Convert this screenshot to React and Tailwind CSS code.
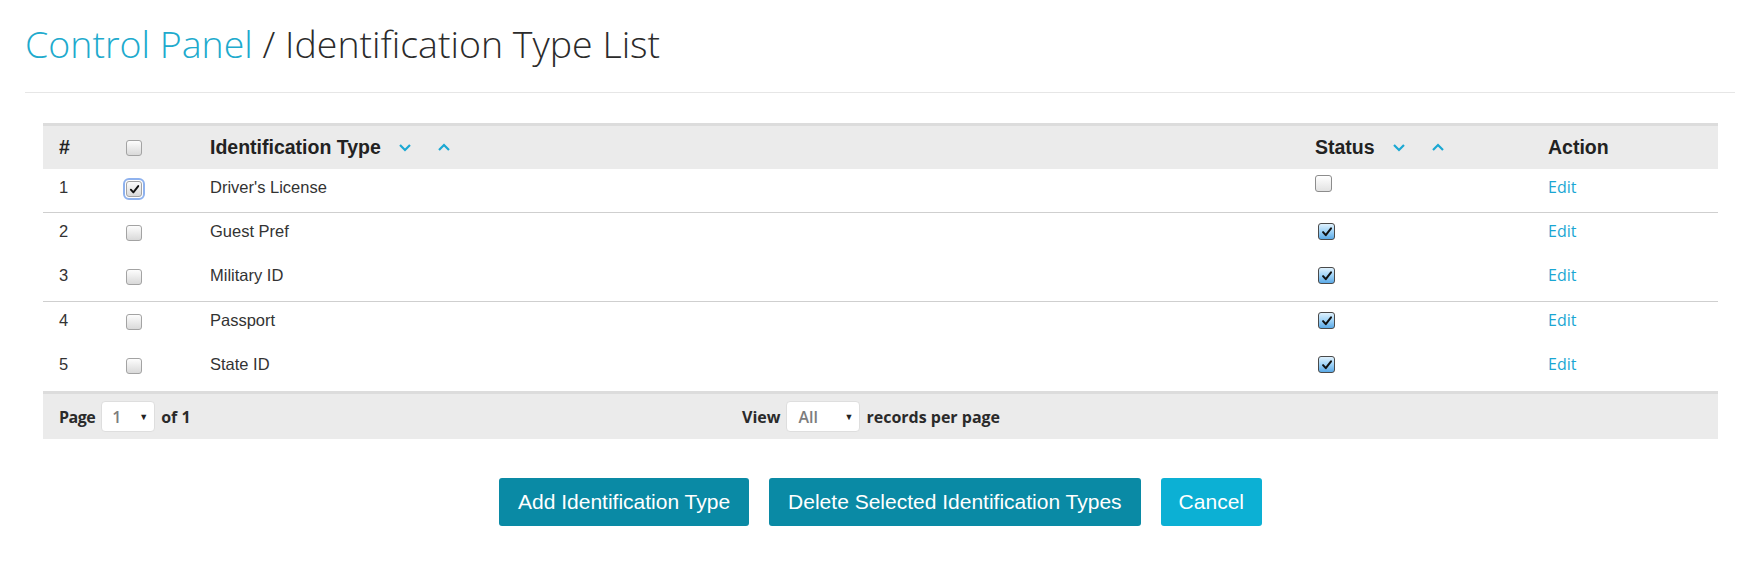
import React from "react";

const rows = [
  { id: 1, name: "Driver's License", picked: true, active: false, line: true, h: "h-[44px]" },
  { id: 2, name: "Guest Pref", picked: false, active: true, line: false, h: "h-[44px]" },
  { id: 3, name: "Military ID", picked: false, active: true, line: true, h: "h-[45px]" },
  { id: 4, name: "Passport", picked: false, active: true, line: false, h: "h-[44px]" },
  { id: 5, name: "State ID", picked: false, active: true, line: false, h: "h-[45px]" },
];

function Check({ className = "" }) {
  return (
    <svg viewBox="0 0 16 16" className={className}>
      <path d="M3.5 8.2 L6.6 11.6 L12.6 3.8" fill="none" stroke="#111" strokeWidth="2.3" strokeLinecap="round" strokeLinejoin="round" />
    </svg>
  );
}

function GrayBox({ checked, focus }) {
  return (
    <span
      className={`inline-flex h-[16px] w-[16px] items-center justify-center rounded-[3px] border border-[#a3a3a3] bg-linear-to-b from-[#fdfdfd] to-[#d9d9d9] ${
        focus ? "outline-2 outline-offset-1 outline-[#8fb2ee]" : ""
      }`}
    >
      {checked && <Check className="h-[13px] w-[13px]" />}
    </span>
  );
}

function BlueBox() {
  return (
    <span className="ml-[3px] mt-[3px] inline-flex h-[17px] w-[17px] items-center justify-center rounded-[3px] border border-[#4a4a4a] bg-linear-to-b from-[#dff1fd] via-[#9fd3f7] to-[#5aa9e6]">
      <Check className="h-[14px] w-[14px]" />
    </span>
  );
}

function Sorters() {
  return (
    <span className="ml-[17px] flex items-center gap-[25px]">
      <svg viewBox="0 0 14 9" className="h-[9px] w-[14px]">
        <polyline points="2,2 7,7 12,2" fill="none" stroke="#1ba8d3" strokeWidth="2.2" />
      </svg>
      <svg viewBox="0 0 14 9" className="h-[9px] w-[14px]">
        <polyline points="2,7 7,2 12,7" fill="none" stroke="#1ba8d3" strokeWidth="2.2" />
      </svg>
    </span>
  );
}

function Select({ value, width, pad }) {
  return (
    <span
      className={`relative mx-[6px] flex h-[31px] ${width} ${pad} items-center rounded-[4px] border border-[#dedede] bg-white font-['Open_Sans'] text-[16px] font-semibold text-[#7d7d7d]`}
    >
      {value}
      <span className="absolute right-[6px] top-[8px] text-[9px] text-[#222]">▼</span>
    </span>
  );
}

export default function App() {
  return (
    <div className="min-h-[578px] bg-white font-['Liberation_Sans',Arial,sans-serif] text-[#333]">
      <div className="ml-[25px] mr-[4px] border-b border-[#e6e6e6] pb-[28px] pt-[24px]">
        <h1 className="font-['Open_Sans',sans-serif] text-[37.5px] font-light leading-[40px] text-[#2b2b2b]">
          <span className="text-[#20aacd]">Control Panel</span> / Identification Type List
        </h1>
      </div>

      <div className="ml-[43px] mr-[21px] mt-[30px]">
        <div className="grid h-[46px] grid-cols-[67px_84px_1105px_233px_1fr] items-center border-t-[3px] border-[#dcdcdc] bg-[#ebebeb] pl-[16px] text-[19.5px] font-bold text-[#222]">
          <span>#</span>
          <span className="flex"><GrayBox /></span>
          <span className="flex items-center">Identification Type<Sorters /></span>
          <span className="flex items-center">Status<Sorters /></span>
          <span>Action</span>
        </div>

        {rows.map((r) => (
          <div
            key={r.id}
            className={`grid ${r.h} grid-cols-[67px_84px_1105px_233px_1fr] items-start pl-[16px] pt-[7px] text-[16.5px] leading-[22px] ${
              r.line ? "border-b border-[#cfcfcf]" : ""
            }`}
          >
            <span>{r.id}</span>
            <span className="mt-[5px] flex">
              <GrayBox checked={r.picked} focus={r.picked} />
            </span>
            <span>{r.name}</span>
            <span className="flex">
              {r.active ? (
                <BlueBox />
              ) : (
                <span className="-mt-[1px] inline-block h-[17px] w-[17px] rounded-[3px] border border-[#8c8c8c] bg-linear-to-b from-[#ffffff] to-[#e2e2e2]" />
              )}
            </span>
            <a className="font-['Open_Sans',sans-serif] text-[16px] text-[#1aa6d3]">Edit</a>
          </div>
        ))}

        <div className="flex h-[48px] items-center border-t-[3px] border-[#dcdcdc] bg-[#ebebeb] pl-[16px] font-['Open_Sans',sans-serif] text-[16px] font-bold text-[#2a2a2a]">
          <div className="flex w-[683px] shrink-0 items-center">
            <span className="tracking-[-0.5px]">Page</span>
            <Select value="1" width="w-[54px]" pad="pl-[10px]" />
            <span>of 1</span>
          </div>
          <div className="flex items-center">
            <span>View</span>
            <Select value="All" width="w-[74px]" pad="pl-[11px]" />
            <span>records per page</span>
          </div>
        </div>

        <div className="mt-[39px] flex justify-center gap-[20px] text-[21px] text-white">
          <button className="h-[48px] rounded-[3px] bg-[#0a8aa5] px-[19px]">Add Identification Type</button>
          <button className="h-[48px] rounded-[3px] bg-[#0a8aa5] px-[19px]">Delete Selected Identification Types</button>
          <button className="h-[48px] rounded-[3px] bg-[#0cb0d4] px-[18px]">Cancel</button>
        </div>
      </div>
    </div>
  );
}
